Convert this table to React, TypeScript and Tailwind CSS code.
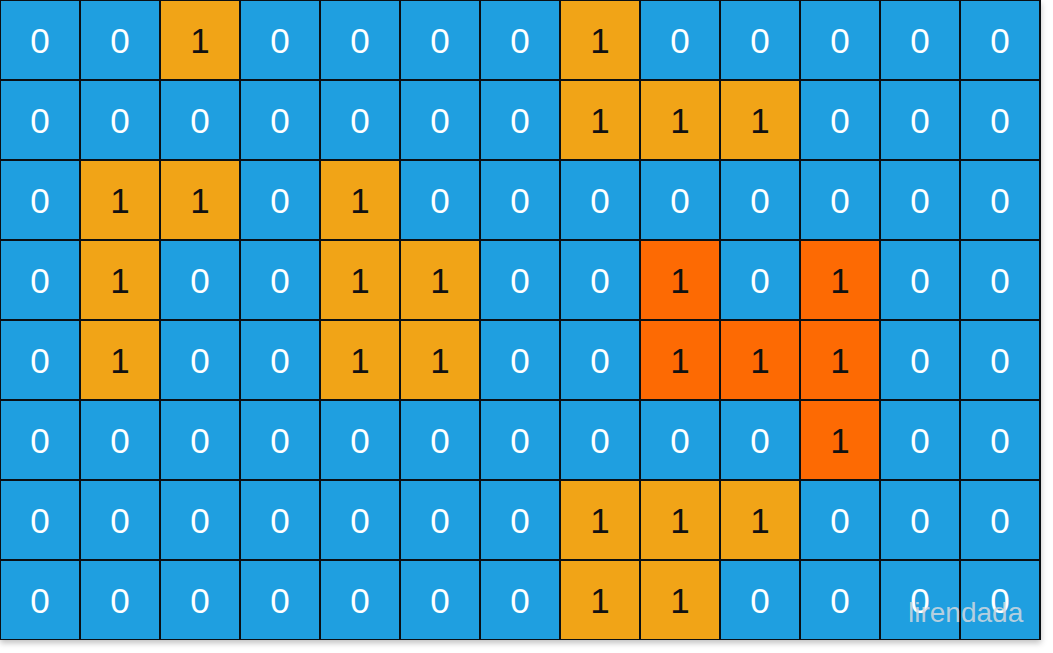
const grid = [
  "0010000100000",
  "0000000111000",
  "0110100000000",
  "0100110020200",
  "0100110022200",
  "0000000000200",
  "0000000111000",
  "0000000110000",
];

export default function App() {
  return (
    <div className="w-[1053px] h-[653px] bg-white overflow-hidden" style={{ fontFamily: '"Liberation Sans", Arial, sans-serif' }}>
      <div className="relative w-[1041px]">
        <div className="grid grid-cols-[repeat(13,78px)] grid-rows-[repeat(8,78px)] gap-[2px] p-[1px] bg-[#0a0f14] shadow-[0_3px_6px_rgba(0,0,0,0.25)] w-[1041px]">
          {grid.flatMap((row, r) =>
            row.split("").map((c, i) => (
              <div
                key={`${r}-${i}`}
                className={
                  c === "0"
                    ? "bg-[#1f9fe0] text-white flex items-center justify-center text-[35px] leading-none"
                    : c === "1"
                    ? "bg-[#f1a417] text-[#111] flex items-center justify-center text-[35px] leading-none"
                    : "bg-[#fd6a03] text-[#111] flex items-center justify-center text-[35px] leading-none"
                }
              >
                {c === "0" ? "0" : "1"}
              </div>
            ))
          )}
        </div>
        <div className="absolute left-[908px] top-[599px] text-[28px] leading-none text-[#d0d8df]/85">lirendada</div>
      </div>
    </div>
  );
}
